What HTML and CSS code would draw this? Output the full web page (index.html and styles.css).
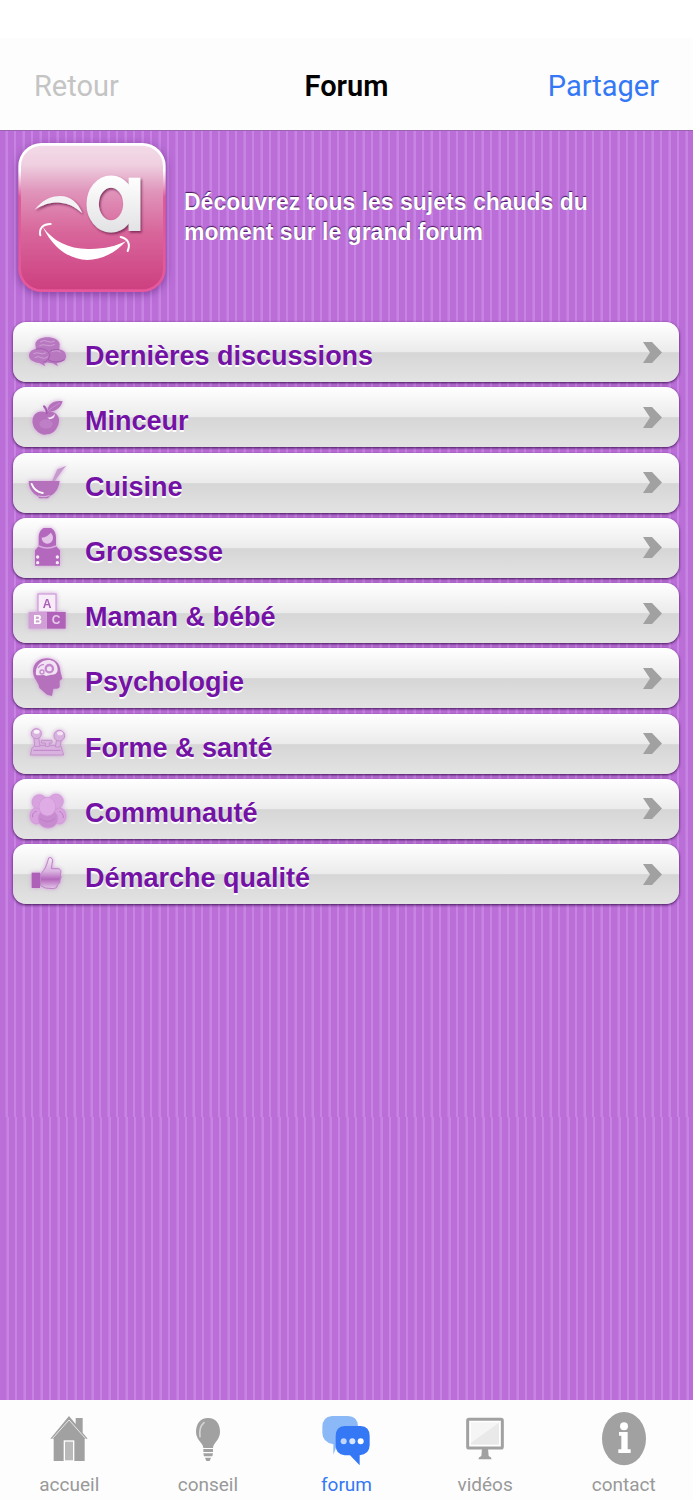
FILE: index.html
```html
<!DOCTYPE html>
<html lang="fr">
<head>
<meta charset="utf-8">
<meta name="viewport" content="width=device-width, initial-scale=1">
<title>Forum</title>
<link rel="stylesheet" href="styles.css">
</head>
<body>
<header class="navbar">
  <button class="nav-button" type="button" disabled>Retour</button>
  <h1 class="nav-title">Forum</h1>
  <button class="nav-button nav-share" type="button">Partager</button>
</header>

<main class="content">
  <section class="intro">
    <svg class="logo" viewBox="54 69 444 447" aria-hidden="true">
      <defs>
        <linearGradient id="pink" x1="0" y1="0" x2="0" y2="1">
          <stop offset="0" stop-color="#f3dbe8"/><stop offset=".14" stop-color="#efcfe0"/>
          <stop offset=".32" stop-color="#e095bb"/><stop offset=".6" stop-color="#d8669b"/>
          <stop offset="1" stop-color="#cd3f80"/>
        </linearGradient>
        <linearGradient id="rim" x1="0" y1="0" x2="0" y2="1">
          <stop offset="0" stop-color="#fff"/><stop offset=".18" stop-color="#fff"/>
          <stop offset=".36" stop-color="#df5a9a"/><stop offset="1" stop-color="#e6579b"/>
        </linearGradient>
        <linearGradient id="silver" gradientUnits="userSpaceOnUse" x1="0" y1="168" x2="0" y2="338">
          <stop offset="0" stop-color="#fff"/><stop offset="1" stop-color="#e2e2e4"/>
        </linearGradient>
        <filter id="drop" x="-20%" y="-20%" width="150%" height="150%">
          <feDropShadow dx="4" dy="5" stdDeviation="3" flood-color="#6c1c48" flood-opacity=".8"/>
        </filter>
      </defs>
      <rect x="59" y="73" width="434" height="439" rx="66" fill="url(#pink)" stroke="url(#rim)" stroke-width="8"/>
      <g filter="url(#drop)">
        <ellipse cx="333" cy="252" rx="55" ry="67" fill="none" stroke="url(#silver)" stroke-width="37"/>
        <rect x="386" y="173" width="35" height="160" fill="url(#silver)"/>
        <path fill="#f4f2f4" d="M104 269C128 240 152 228 181 228C212 228 234 248 247 280C224 260 206 250 181 248C152 246 130 254 104 269Z"/>
      </g>
      <path fill="#fff" d="M128 320C158 362 204 386 264 387C312 388 348 378 378 364C346 398 306 420 262 420C206 418 158 382 128 320Z"/>
      <path fill="none" stroke="#fff" stroke-width="6" stroke-linecap="round" d="M121 346C116 324 130 312 152 312M362 351C384 356 392 372 383 393"/>
    </svg>
    <p class="intro-text">Découvrez tous les sujets chauds du moment sur le grand forum</p>
  </section>

  <ul class="topics">
    <li><a class="topic" href="#discussions">
      <svg class="topic-icon" viewBox="81 67 120 120" aria-hidden="true">
        <path fill="#b878bf" d="M106 104C108 76 176 76 179 104L178 119C196 122 202 138 196 148C190 158 172 160 170 160L174 170L158 161C148 161 142 158 142 158C138 161 134 161 132 161L136 170L118 160C98 158 86 148 87 136C88 126 96 120 108 117Z"/>
        <path fill="none" stroke="#cf9fd6" stroke-width="3" d="M120 97q12-8 22-2t22-1M118 108q12-5 22-1t24-3M100 132q12-5 20-1t18-2M104 144q12-6 20 0t20-3M156 126q16-6 26 2"/>
        <path fill="none" stroke="#a35cb0" stroke-width="3" d="M108 118q34-6 42 18q-4 18-20 22M148 126q4-6 28-7M144 150q22 14 50 0"/>
      </svg><span>Dernières discussions</span>
      <svg class="chevron" viewBox="0 0 19 21" aria-hidden="true"><path d="M0 0H9L19 10.500L9 21H0L7 10.500Z"/></svg></a></li>
    <li><a class="topic" href="#minceur">
      <svg class="topic-icon" viewBox="81 263 120 120" aria-hidden="true">
        <path fill="#b671bd" d="M138 310C114 298 94 318 98 342C102 366 126 380 140 375C162 376 178 352 177 330C175 312 156 302 138 310Z"/>
        <path fill="#b671bd" d="M142 308C142 286 160 272 188 276C182 298 164 308 142 308Z"/>
        <path fill="none" stroke="#a458b0" stroke-width="6" stroke-linecap="round" d="M140 312Q140 298 132 291"/>
        <path fill="none" stroke="#c68bcd" stroke-width="3" d="M144 304L180 280"/>
        <ellipse cx="138" cy="344" rx="20" ry="14" fill="#bf7fc7"/>
        <path fill="#f4e4f6" d="M142 324Q156 326 164 313Q166 328 148 330Z"/>
      </svg><span>Minceur</span>
      <svg class="chevron" viewBox="0 0 19 21" aria-hidden="true"><path d="M0 0H9L19 10.500L9 21H0L7 10.500Z"/></svg></a></li>
    <li><a class="topic" href="#cuisine">
      <svg class="topic-icon" viewBox="81 459 120 120" aria-hidden="true">
        <path fill="#c79ace" d="M156 514L172 478L184 473L199 467L188 480L164 514Z"/>
        <path fill="#b671bd" d="M86 513H179C176 538 164 552 150 558L144 565H118L112 557C98 550 86 536 86 513Z"/>
        <path fill="none" stroke="#fff" stroke-width="6" stroke-linecap="round" d="M95 522Q104 545 128 549"/>
        <path fill="none" stroke="#dcbde0" stroke-width="3" d="M114 558Q132 563 149 557"/>
      </svg><span>Cuisine</span>
      <svg class="chevron" viewBox="0 0 19 21" aria-hidden="true"><path d="M0 0H9L19 10.500L9 21H0L7 10.500Z"/></svg></a></li>
    <li><a class="topic" href="#grossesse">
      <svg class="topic-icon" viewBox="81 55 120 120" aria-hidden="true">
        <path fill="#b368bd" d="M116 110V84C116 42 168 42 168 84V110L180 122V168H105V122Z"/>
        <ellipse cx="142" cy="84" rx="17" ry="18" fill="#e3c4e8"/>
        <path fill="#b368bd" d="M124 84Q144 82 154 66L142 62L124 70Z"/>
        <path fill="none" stroke="#d9addf" stroke-width="5" d="M116 109Q142 121 168 109"/>
        <g fill="#f6eaf7"><circle cx="113" cy="142" r="5"/><circle cx="113" cy="159" r="5"/><circle cx="172" cy="142" r="5"/><circle cx="172" cy="159" r="5"/></g>
      </svg><span>Grossesse</span>
      <svg class="chevron" viewBox="0 0 19 21" aria-hidden="true"><path d="M0 0H9L19 10.500L9 21H0L7 10.500Z"/></svg></a></li>
    <li><a class="topic" href="#maman">
      <svg class="topic-icon" viewBox="81 251 120 120" aria-hidden="true">
        <rect x="114" y="254" width="54" height="54" fill="#f7ecf8" stroke="#d3a3da" stroke-width="4"/>
        <rect x="86" y="308" width="54" height="50" fill="#cf9fd6"/><rect x="141" y="308" width="56" height="50" fill="#b062b8"/>
        <g class="cube-letter"><text x="141" y="297" fill="#ab5fb7">A</text><text x="113" y="345" fill="#fff">B</text><text x="168" y="345" fill="#e6c9ea">C</text></g>
      </svg><span>Maman &amp; bébé</span>
      <svg class="chevron" viewBox="0 0 19 21" aria-hidden="true"><path d="M0 0H9L19 10.500L9 21H0L7 10.500Z"/></svg></a></li>
    <li><a class="topic" href="#psychologie">
      <svg class="topic-icon" viewBox="81 446 120 120" aria-hidden="true">
        <path fill="#b671bd" d="M118 536C116 518 99 508 99 486C100 434 182 434 181 486L187 508L179 514V532Q176 540 160 538L156 560L141 556Z"/>
        <path fill="#f1e2f4" d="M108 496C102 446 168 438 172 474C176 490 166 498 154 496L138 500C128 492 118 502 108 496Z"/>
        <circle cx="148" cy="478" r="11" fill="none" stroke="#c48bcc" stroke-width="7"/>
        <circle cx="126" cy="488" r="6" fill="none" stroke="#c48bcc" stroke-width="4"/>
        <path fill="none" stroke="#c48bcc" stroke-width="4" d="M114 476q8-12 18-10"/>
      </svg><span>Psychologie</span>
      <svg class="chevron" viewBox="0 0 19 21" aria-hidden="true"><path d="M0 0H9L19 10.500L9 21H0L7 10.500Z"/></svg></a></li>
    <li><a class="topic" href="#forme">
      <svg class="topic-icon" viewBox="81 57 120 120" aria-hidden="true">
        <g fill="#d9b3df" stroke="#c591cc" stroke-width="3">
          <path d="M96 130L104 122H182L191 150H91Z"/>
          <path d="M102 98H116L120 124H104ZM170 104H184L180 126H166ZM124 106H156V114H148V124H136V114H124Z"/>
          <circle cx="109" cy="86" r="15"/><circle cx="178" cy="92" r="16"/>
        </g>
        <ellipse cx="110" cy="80" rx="9" ry="6" fill="#faf2fb"/><ellipse cx="180" cy="85" rx="9" ry="6" fill="#f3e3f5"/>
        <path stroke="#c083c9" stroke-width="3" d="M100 136H182"/>
      </svg><span>Forme &amp; santé</span>
      <svg class="chevron" viewBox="0 0 19 21" aria-hidden="true"><path d="M0 0H9L19 10.500L9 21H0L7 10.500Z"/></svg></a></li>
    <li><a class="topic" href="#communaute">
      <svg class="topic-icon" viewBox="81 253 120 120" aria-hidden="true">
        <g fill="#d8a2df" stroke="#cf95d6" stroke-width="2">
          <circle cx="118" cy="292" r="22"/><circle cx="168" cy="290" r="22"/>
          <ellipse cx="109" cy="334" rx="19" ry="24"/><ellipse cx="179" cy="334" rx="19" ry="24"/>
          <ellipse cx="144" cy="342" rx="30" ry="28" fill="#c98bd0"/>
          <ellipse cx="142" cy="306" rx="25" ry="28" fill="#dface6"/>
        </g>
        <path fill="none" stroke="#be7cc6" stroke-width="3" d="M98 338Q96 322 110 320M190 340Q190 324 178 320M120 342Q142 360 166 342"/>
      </svg><span>Communauté</span>
      <svg class="chevron" viewBox="0 0 19 21" aria-hidden="true"><path d="M0 0H9L19 10.500L9 21H0L7 10.500Z"/></svg></a></li>
    <li><a class="topic" href="#qualite">
      <svg class="topic-icon" viewBox="81 448 120 120" aria-hidden="true">
        <defs><linearGradient id="thumb" x1="0" y1="0" x2="0" y2="1"><stop offset="0" stop-color="#f6ecf7"/><stop offset=".45" stop-color="#d9b2df"/><stop offset=".7" stop-color="#b468bd"/><stop offset="1" stop-color="#e4c8e8"/></linearGradient></defs>
        <path fill="url(#thumb)" stroke="#bd83c5" stroke-width="3" d="M121 509C136 494 140 482 146 460Q154 454 158 466L154 492H176Q186 496 181 508Q186 518 180 526Q182 536 173 540Q172 552 160 552L136 550L121 542Z"/>
        <rect x="95" y="504" width="25" height="46" fill="#ae60b8"/>
      </svg><span>Démarche qualité</span>
      <svg class="chevron" viewBox="0 0 19 21" aria-hidden="true"><path d="M0 0H9L19 10.500L9 21H0L7 10.500Z"/></svg></a></li>
  </ul>
</main>

<nav class="tabbar">
  <a class="tab" href="#accueil">
    <svg class="tab-icon" viewBox="130 60 156 168" aria-hidden="true">
      <path fill="#a1a1a1" d="M152 146L208 78L228 102V84H249V128L264 146H255V213H162V146Z"/>
      <path fill="none" stroke="#e9e9e9" stroke-width="3" d="M158 146L208 90L258 146"/>
      <rect x="194" y="153" width="28" height="60" fill="#b9b9b9" stroke="#fff" stroke-width="4"/>
    </svg><span>accueil</span></a>
  <a class="tab" href="#conseil">
    <svg class="tab-icon" viewBox="546 60 156 168" aria-hidden="true">
      <path fill="#a1a1a1" d="M624 84C648 84 660 102 660 126C660 150 640 158 639 174H610C609 158 588 150 588 126C588 102 600 84 624 84ZM610 177H639V186H610ZM610 190H639L637 199H612ZM615 203H633L629 213H619Z"/>
      <path fill="none" stroke="#d5d5d5" stroke-width="5" stroke-linecap="round" d="M600 140Q596 112 612 98"/>
    </svg><span>conseil</span></a>
  <a class="tab tab-active" href="#forum" aria-current="page">
    <svg class="tab-icon" viewBox="90 60 156 168" aria-hidden="true">
      <path fill="#8bb9f8" d="M126 78H174Q202 78 204 108V162H142L130 194V163Q97 156 97 128V112Q97 80 126 78Z"/>
      <path fill="#3478f6" d="M164 108H212Q239 110 239 138V166Q238 194 209 196V226L180 196H164Q137 194 137 166V138Q137 110 164 108Z"/>
      <circle cx="161" cy="154" r="9" fill="#bfd5fb"/><circle cx="187" cy="154" r="9" fill="#d8e5fd"/><circle cx="212" cy="154" r="9" fill="#fff"/>
    </svg><span>forum</span></a>
  <a class="tab" href="#videos">
    <svg class="tab-icon" viewBox="503 60 156 168" aria-hidden="true">
      <path fill="#a1a1a1" d="M572 176H590L592 198Q600 200 601 208H561Q562 200 570 198Z"/>
      <rect x="529" y="88" width="104" height="86" rx="4" fill="#fff" stroke="#a1a1a1" stroke-width="9"/>
      <rect x="539" y="98" width="84" height="66" fill="#e9e9e9"/><path fill="#f5f5f5" d="M539 98H623L539 158Z"/>
    </svg><span>vidéos</span></a>
  <a class="tab" href="#contact">
    <svg class="tab-icon" viewBox="921 60 156 168" aria-hidden="true">
      <ellipse cx="999" cy="146" rx="66" ry="80" fill="#a1a1a1"/>
      <circle cx="999" cy="109" r="12" fill="#fff"/><path fill="#fff" d="M984 126H1010V178H1019V189H982V178H991V137H984Z"/>
    </svg><span>contact</span></a>
</nav>
</body>
</html>
```
FILE: styles.css
```css
* { box-sizing: border-box; }

body {
  margin: 0;
  min-height: 100vh;
  display: flex;
  flex-direction: column;
  background: #fff;
  font-family: "Liberation Sans", Arial, sans-serif;
}

.navbar {
  display: grid;
  grid-template-columns: 1fr auto 1fr;
  align-items: center;
  padding: 64px 34px 22px;
  border-bottom: 1px solid #9a63b0;
  background: linear-gradient(#fff 38px, #fdfdfd 38px);
  font-family: "Roboto", sans-serif;
}

.nav-button,
.nav-title {
  margin: 0;
  padding: 0;
  border: 0;
  background: none;
  font: inherit;
  font-size: 29px;
  line-height: 44px;
  color: #c4c4c4;
  justify-self: start;
}

.nav-title { color: #000; font-weight: 600; }
.nav-share { color: #3478f6; justify-self: end; }

.content {
  --stripes: linear-gradient(90deg, #bb6ed8 5px, #c17bdd 5px 6px, #c784e2 6px 8px, #bb6ed8 8px 14px, #c784e2 14px 16px, #bb6ed8 16px);
  flex: 1;
  padding: 12px 14px 24px 13px;
  background: var(--stripes) 0 0 / 17px 986px repeat-x, var(--stripes) 1px 0 / 17px 100%;
}

.intro {
  display: flex;
  align-items: center;
  gap: 18px;
  padding-left: 5px;
}

.logo {
  flex: none;
  width: 148px;
  height: 149px;
  filter: drop-shadow(0 2px 4px rgba(70, 20, 100, .5));
}

.intro-text {
  margin: 0;
  padding-bottom: 2px;
  max-width: 430px;
  color: #fff;
  font-size: 23px;
  font-weight: bold;
  line-height: 30px;
  text-shadow: 0 -1px 1px rgba(50, 10, 70, .9);
}

.topics {
  display: grid;
  align-content: space-between;
  min-height: 582px;
  margin: 30px 0 0;
  padding: 0;
  list-style: none;
}

.topic {
  display: flex;
  align-items: center;
  gap: 18px;
  height: 60px;
  padding: 0 17px 0 14px;
  border-radius: 13px;
  background: linear-gradient(#fff, #ebebeb 50%, #d6d6d6 51%, #e3e3e3);
  box-shadow: 0 1px 3px rgba(40, 0, 60, .85);
  color: #7412a6;
  font-size: 27px;
  font-weight: bold;
  text-decoration: none;
  text-shadow: 0 2px 0 #fff;
}

.topic span { flex: 1; padding-top: 9px; }

.topic-icon {
  width: 40px;
  height: 40px;
  filter: drop-shadow(0 0 2px #d0a0d8);
  text-shadow: none;
}

.cube-letter { font: bold 36px "Liberation Sans", sans-serif; text-anchor: middle; }
.chevron { width: 19px; height: 21px; fill: #a1a1a1; }

.tabbar {
  display: grid;
  grid-template-columns: repeat(5, 1fr);
  padding: 10px 0 3px;
  background: #fdfdfd;
}

.tab {
  display: flex;
  flex-direction: column;
  align-items: center;
  gap: 6px;
  color: #999;
  font-family: "Roboto", sans-serif;
  font-size: 19px;
  line-height: 25px;
  text-decoration: none;
}

.tab-icon { width: 52px; height: 56px; }
.tab-active { color: #3478f6; }
```
